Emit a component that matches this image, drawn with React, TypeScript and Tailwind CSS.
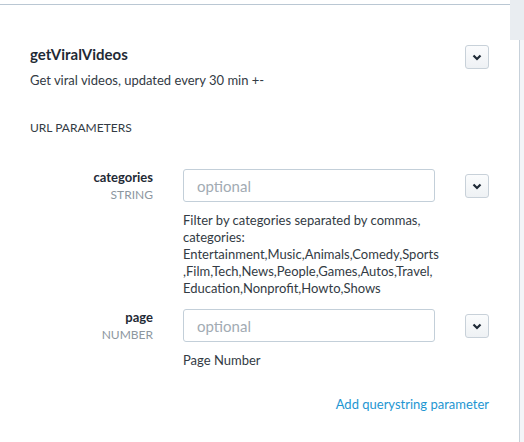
const params = [
  {
    name: "categories",
    type: "STRING",
    description:
      "Filter by categories separated by commas, categories: Entertainment,Music,Animals,Comedy,Sports ,Film,Tech,News,People,Games,Autos,Travel, Education,Nonprofit,Howto,Shows",
  },
  {
    name: "page",
    type: "NUMBER",
    description: "Page Number",
  },
];

const ChevronButton = ({ className = "" }: { className?: string }) => (
  <button
    className={`flex h-6 w-6 shrink-0 items-center justify-center rounded-[3px] border border-[#c8d1d9] bg-gradient-to-b from-[#fbfcfd] to-[#eef1f4] ${className}`}
  >
    <svg width="10" height="7" viewBox="0 0 10 7">
      <path d="M1.5 1.5 L5 5 L8.5 1.5" fill="none" stroke="#1f2a36" strokeWidth="2.2" />
    </svg>
  </button>
);

const App = () => {
  return (
    <div
      className="flex h-[442px] w-[524px] overflow-hidden bg-white text-[#333b44]"
      style={{ fontFamily: "Lato, 'Noto Sans', sans-serif" }}
    >
      <div className="flex-1 pt-1">
        <div className="border-t border-[#bac7d3] pl-[30px] pr-[21px] pt-[39px]">
          <div className="flex items-start justify-between">
            <div>
              <h1 className="text-[15px] leading-5 font-bold text-[#1f2a35]">getViralVideos</h1>
              <p className="mt-[7px] text-[13px] leading-[18px]">Get viral videos, updated every 30 min +-</p>
            </div>
            <ChevronButton className="mt-px" />
          </div>

          <h2 className="mt-[31px] text-[12px] leading-4 uppercase">URL Parameters</h2>

          <div className="mt-[33px] flex flex-col gap-3">
            {params.map((p) => (
              <div key={p.name} className="flex items-start gap-[30px]">
                <div className="w-[123px] text-right">
                  <div className="text-[13px] leading-[17px] font-bold text-[#1f2a35]">{p.name}</div>
                  <div className="text-[12px] leading-[17px] text-[#8d979f]">{p.type}</div>
                </div>
                <div className="w-[252px]">
                  <input
                    placeholder="optional"
                    className="h-[33px] w-full rounded-[3px] border border-[#c3cfd9] px-[13px] text-[15px] placeholder:text-[#a2abb3] outline-none"
                  />
                  <p className="mt-[10px] text-[13px] leading-[17px]">{p.description}</p>
                </div>
                <ChevronButton className="mt-[5px]" />
              </div>
            ))}
          </div>

          <div className="mt-[22px] text-right">
            <a className="text-[13px] leading-[17px] text-[#1e96d2]">Add querystring parameter</a>
          </div>
        </div>
      </div>

      <div className="flex w-[14px] flex-col">
        <div className="h-10 bg-[#e9edf1]" />
        <div className="flex flex-1">
          <div className="w-[9px]" />
          <div className="flex-1 border-l border-[#c7d1da] bg-[#f3f5f8]" />
        </div>
      </div>
    </div>
  );
};

export default App;
